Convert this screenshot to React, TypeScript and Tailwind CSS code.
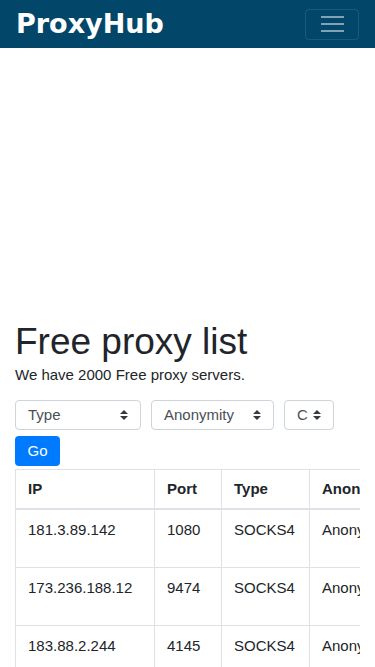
const proxies = [
  { ip: '181.3.89.142', port: '1080', type: 'SOCKS4', anon: 'Anonymous', country: 'Argentina' },
  { ip: '173.236.188.12', port: '9474', type: 'SOCKS4', anon: 'Anonymous', country: 'United States' },
  { ip: '183.88.2.244', port: '4145', type: 'SOCKS4', anon: 'Anonymous', country: 'Thailand' },
]

function Caret() {
  return (
    <svg width="8" height="10" viewBox="0 0 8 10" className="shrink-0">
      <path d="M4 0 L8 4 H0 Z M4 10 L0 6 H8 Z" fill="#343a40" />
    </svg>
  )
}

function Select({ label, width }: { label: string; width: string }) {
  return (
    <div
      className={`${width} h-[30px] flex items-center justify-between pl-3 pr-3 border border-[#ced4da] rounded-[4px] bg-white text-[15px] text-[#495057]`}
    >
      <span>{label}</span>
      <Caret />
    </div>
  )
}

export default function App() {
  return (
    <div className="min-h-screen bg-white font-['Liberation_Sans',Arial,sans-serif] text-[#212529]">
      {/* Navbar */}
      <nav className="h-12 bg-[#02476a] flex items-center justify-between pl-4 pr-4">
        <span className="font-['DejaVu_Sans',sans-serif] font-bold text-[27px] text-white">
          ProxyHub
        </span>
        <button className="w-[54px] h-[31px] border border-white/10 rounded-[4px] flex flex-col items-center justify-center gap-[5px]">
          <span className="block w-[23px] h-[2px] bg-white/50" />
          <span className="block w-[23px] h-[2px] bg-white/50" />
          <span className="block w-[23px] h-[2px] bg-white/50" />
        </button>
      </nav>

      {/* ad space */}
      <div className="h-[272px]" />

      <div className="px-[15px]">
        <h1 className="text-[37px] leading-[1.2] font-normal">Free proxy list</h1>
        <p className="text-[15px] leading-[1.5]">We have 2000 Free proxy servers.</p>

        <div className="flex gap-[10px] mt-[13px]">
          <Select label="Type" width="w-[126px]" />
          <Select label="Anonymity" width="w-[123px]" />
          <Select label="C" width="w-[50px]" />
        </div>

        <button className="mt-[6px] w-[45px] h-[30px] bg-[#007bff] text-white text-[15px] rounded-[4px]">
          Go
        </button>

        <div className="mt-[3px] w-[345px] overflow-hidden">
          <table className="border-collapse text-[15px] w-[560px] table-fixed">
            <colgroup>
              <col className="w-[139px]" />
              <col className="w-[67px]" />
              <col className="w-[88px]" />
              <col className="w-[130px]" />
              <col className="w-[136px]" />
            </colgroup>
            <thead>
              <tr className="h-[40px]">
                {['IP', 'Port', 'Type', 'Anonymity', 'Country'].map((h) => (
                  <th
                    key={h}
                    className="text-left font-bold px-3 border border-[#dee2e6] border-b-2 whitespace-nowrap"
                  >
                    {h}
                  </th>
                ))}
              </tr>
            </thead>
            <tbody>
              {proxies.map((p) => (
                <tr key={p.ip} className="h-[58px]">
                  {[p.ip, p.port, p.type, p.anon, p.country].map((v, i) => (
                    <td
                      key={i}
                      className="align-top px-3 pt-[9px] border border-[#dee2e6] whitespace-nowrap"
                    >
                      {v}
                    </td>
                  ))}
                </tr>
              ))}
            </tbody>
          </table>
        </div>
      </div>
    </div>
  )
}
